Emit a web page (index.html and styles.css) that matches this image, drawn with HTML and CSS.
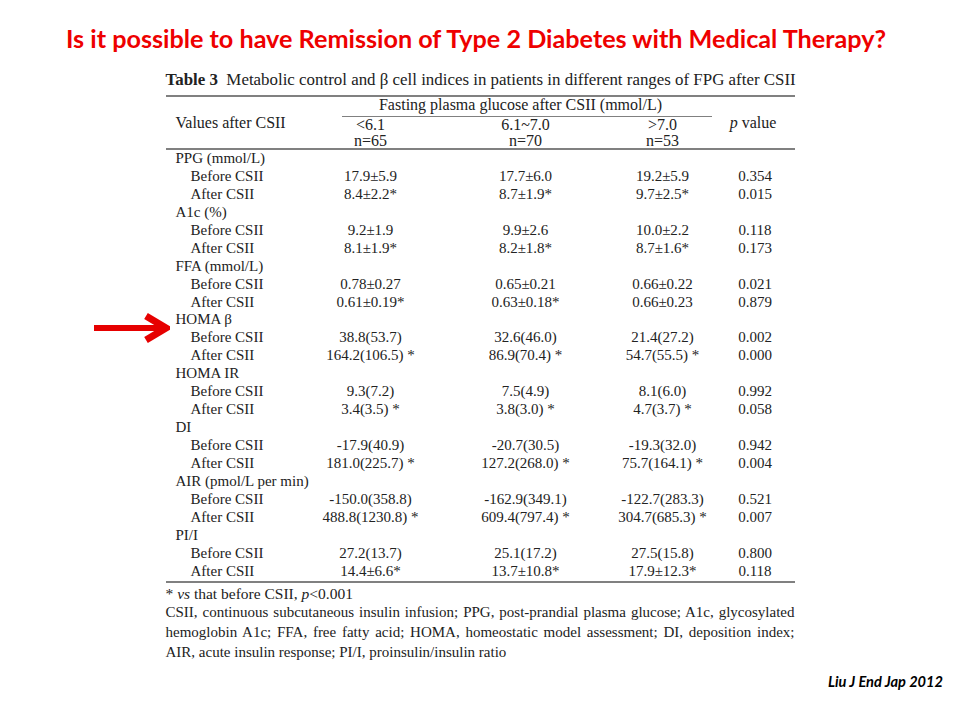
FILE: index.html
```html
<!DOCTYPE html>
<html>
<head>
<meta charset="utf-8">
<title>Remission of Type 2 Diabetes</title>
<link rel="stylesheet" href="styles.css">
</head>
<body>
<h1 class="title">Is it possible to have Remission of Type 2 Diabetes with Medical Therapy?</h1>
<div class="figure">
  <div class="caption"><b>Table 3</b>&nbsp; Metabolic control and β cell indices in patients in different ranges of FPG after CSII</div>
  <div class="head">
    <div class="h-label">Values after CSII</div>
    <div class="h-group"><span class="h-group-text">Fasting plasma glucose after CSII (mmol/L)</span></div>
    <div class="h-sub">&lt;6.1<br>n=65</div>
    <div class="h-sub">6.1~7.0<br>n=70</div>
    <div class="h-sub">&gt;7.0<br>n=53</div>
    <div class="h-p"><i>p</i> value</div>
  </div>
  <div class="rows">
    <div class="cat">PPG (mmol/L)</div><div></div><div></div><div></div><div></div>
    <div class="sub">Before CSII</div><div>17.9±5.9</div><div>17.7±6.0</div><div>19.2±5.9</div><div>0.354</div>
    <div class="sub">After CSII</div><div>8.4±2.2*</div><div>8.7±1.9*</div><div>9.7±2.5*</div><div>0.015</div>
    <div class="cat">A1c (%)</div><div></div><div></div><div></div><div></div>
    <div class="sub">Before CSII</div><div>9.2±1.9</div><div>9.9±2.6</div><div>10.0±2.2</div><div>0.118</div>
    <div class="sub">After CSII</div><div>8.1±1.9*</div><div>8.2±1.8*</div><div>8.7±1.6*</div><div>0.173</div>
    <div class="cat">FFA (mmol/L)</div><div></div><div></div><div></div><div></div>
    <div class="sub">Before CSII</div><div>0.78±0.27</div><div>0.65±0.21</div><div>0.66±0.22</div><div>0.021</div>
    <div class="sub">After CSII</div><div>0.61±0.19*</div><div>0.63±0.18*</div><div>0.66±0.23</div><div>0.879</div>
    <div class="cat marked">HOMA β<svg class="arrow" width="80" height="38" viewBox="0 0 80 38" aria-hidden="true"><line x1="4" y1="19" x2="72" y2="19" stroke="#e60000" stroke-width="6"/><polyline points="56,7 76,19 56,31" fill="none" stroke="#e60000" stroke-width="7" stroke-linejoin="miter" stroke-miterlimit="10"/></svg></div><div></div><div></div><div></div><div></div>
    <div class="sub">Before CSII</div><div>38.8(53.7)</div><div>32.6(46.0)</div><div>21.4(27.2)</div><div>0.002</div>
    <div class="sub">After CSII</div><div>164.2(106.5) *</div><div>86.9(70.4) *</div><div>54.7(55.5) *</div><div>0.000</div>
    <div class="cat">HOMA IR</div><div></div><div></div><div></div><div></div>
    <div class="sub">Before CSII</div><div>9.3(7.2)</div><div>7.5(4.9)</div><div>8.1(6.0)</div><div>0.992</div>
    <div class="sub">After CSII</div><div>3.4(3.5) *</div><div>3.8(3.0) *</div><div>4.7(3.7) *</div><div>0.058</div>
    <div class="cat">DI</div><div></div><div></div><div></div><div></div>
    <div class="sub">Before CSII</div><div>-17.9(40.9)</div><div>-20.7(30.5)</div><div>-19.3(32.0)</div><div>0.942</div>
    <div class="sub">After CSII</div><div>181.0(225.7) *</div><div>127.2(268.0) *</div><div>75.7(164.1) *</div><div>0.004</div>
    <div class="cat">AIR (pmol/L per min)</div><div></div><div></div><div></div><div></div>
    <div class="sub">Before CSII</div><div>-150.0(358.8)</div><div>-162.9(349.1)</div><div>-122.7(283.3)</div><div>0.521</div>
    <div class="sub">After CSII</div><div>488.8(1230.8) *</div><div>609.4(797.4) *</div><div>304.7(685.3) *</div><div>0.007</div>
    <div class="cat">PI/I</div><div></div><div></div><div></div><div></div>
    <div class="sub">Before CSII</div><div>27.2(13.7)</div><div>25.1(17.2)</div><div>27.5(15.8)</div><div>0.800</div>
    <div class="sub">After CSII</div><div>14.4±6.6*</div><div>13.7±10.8*</div><div>17.9±12.3*</div><div>0.118</div>
  </div>
  <div class="notes">
    <span class="line first">* <i>vs</i> that before CSII, <i>p</i>&lt;0.001</span>
    <span class="line just">CSII, continuous subcutaneous insulin infusion; PPG, post-prandial plasma glucose; A1c, glycosylated</span>
    <span class="line just">hemoglobin A1c; FFA, free fatty acid; HOMA, homeostatic model assessment; DI, deposition index;</span>
    <span class="line">AIR, acute insulin response; PI/I, proinsulin/insulin ratio</span>
  </div>
</div>
<div class="cite">Liu J End Jap 2012</div>
</body>
</html>
```
FILE: styles.css
```css
html, body {
  margin: 0;
  padding: 0;
  background: #ffffff;
}

body {
  width: 960px;
  height: 720px;
  overflow: hidden;
}

.title {
  margin: 0;
  padding-top: 24px;
  font-family: Lato, "Liberation Sans", sans-serif;
  font-weight: 700;
  font-size: 25.2px;
  line-height: 28px;
  color: #ee0000;
  text-align: center;
  position: relative;
  left: -4px;
}

.figure {
  width: 629px;
  margin: 19px auto 0;
  font-family: "Liberation Serif", serif;
  font-size: 15px;
  color: #222222;
}

.caption {
  line-height: 18px;
  margin-bottom: 6px;
  white-space: nowrap;
  font-size: 16.9px;
}

.head,
.rows {
  display: grid;
  grid-template-columns: 134px 142px 168px 106px 79px;
}

.head {
  border-top: 2px solid #808080;
  border-bottom: 2px solid #808080;
  grid-template-rows: 20px 31px;
  font-size: 16px;
}

.h-label {
  grid-column: 1;
  grid-row: 1 / 3;
  align-self: center;
  padding-left: 10px;
  line-height: 16px;
  white-space: nowrap;
}

.h-group {
  grid-column: 2 / 5;
  grid-row: 1;
  margin: 0 4px 0 42px;
  border-bottom: 1px solid #808080;
  text-align: center;
  line-height: 16px;
  white-space: nowrap;
}

.h-group-text {
  position: relative;
  left: -6px;
}

.h-sub {
  grid-row: 2;
  text-align: center;
  line-height: 15.5px;
}

.h-p {
  grid-column: 5;
  grid-row: 1 / 3;
  align-self: center;
  text-align: center;
  line-height: 16px;
  padding-right: 4px;
}

.rows {
  grid-auto-rows: 17.95px;
  line-height: 17.95px;
  text-align: center;
  border-bottom: 2px solid #808080;
}

.rows > .cat,
.rows > .sub {
  text-align: left;
  white-space: nowrap;
}

.cat {
  padding-left: 10px;
}

.sub {
  padding-left: 25px;
}

.marked {
  position: relative;
}

.arrow {
  position: absolute;
  left: -76px;
  top: -2px;
}

.notes {
  padding-top: 1px;
  line-height: 19.7px;
}

.line {
  display: block;
  white-space: nowrap;
}

.line.first {
  font-size: 15.5px;
}

.line.just {
  text-align: justify;
  text-align-last: justify;
}

.cite {
  margin-top: 11px;
  padding-right: 17px;
  text-align: right;
  font-family: Lato, "Liberation Sans", sans-serif;
  font-weight: 700;
  font-style: italic;
  font-size: 14.6px;
  line-height: 18px;
  color: #000000;
}
```
